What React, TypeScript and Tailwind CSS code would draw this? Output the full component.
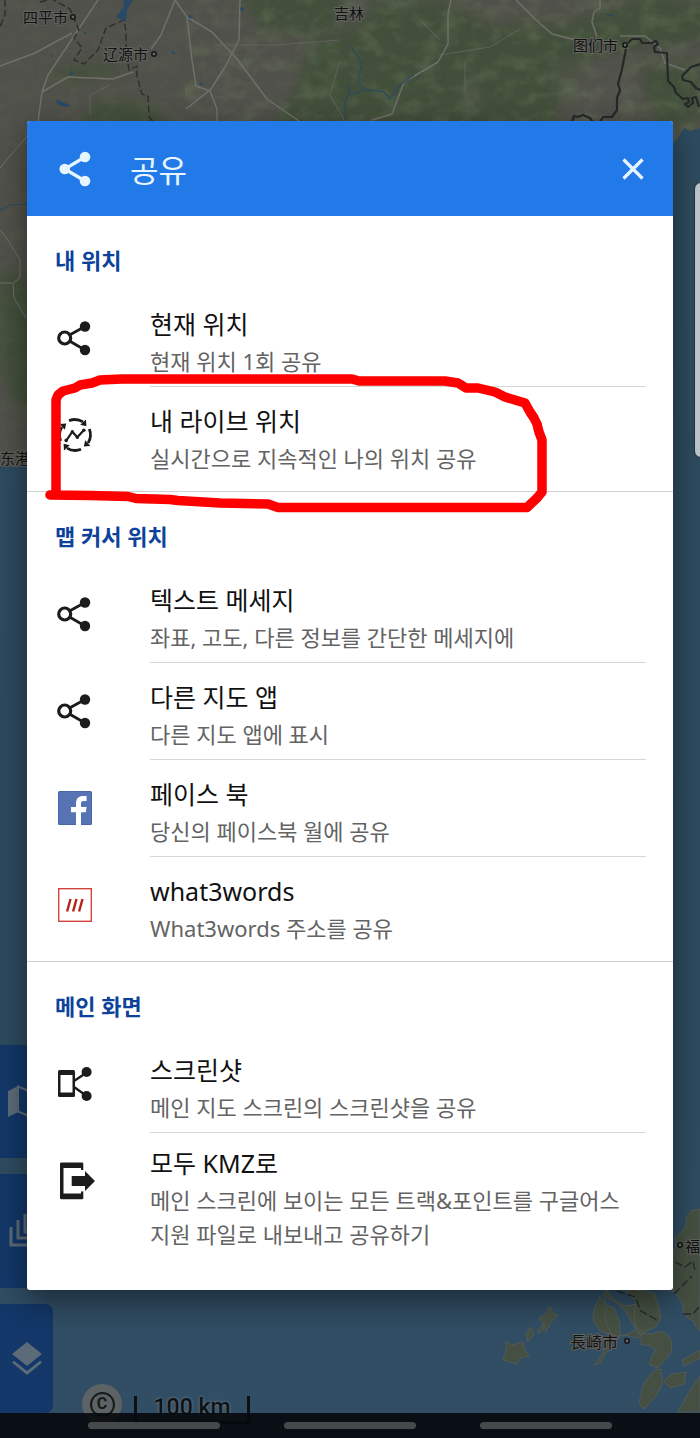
import type { ReactNode } from "react";

type ShareOption = {
  id: string;
  title: string;
  description: string;
  icon: ReactNode;
};

type ShareSection = {
  heading: string;
  options: ShareOption[];
};

const ShareIcon = () => (
  <svg viewBox="0 0 40 40" className="size-10" fill="none" aria-hidden="true">
    <path d="M14.5 17 30 8.5M14.5 23 30 32" stroke="#1c1c1c" strokeWidth="2.8" />
    <circle cx="9.7" cy="20" r="6" stroke="#1c1c1c" strokeWidth="3.2" />
    <circle cx="30" cy="8.5" r="5.2" fill="#1c1c1c" />
    <circle cx="30" cy="32" r="5.2" fill="#1c1c1c" />
  </svg>
);

const LiveIcon = () => (
  <svg viewBox="0 0 40 40" className="size-10" fill="none" aria-hidden="true">
    {[0, 90, 180, 270].map((angle) => (
      <g key={angle} transform={`rotate(${angle} 20 20)`}>
        <path d="M14 5.7A15.5 15.5 0 0 1 28 6.9" stroke="#1c1c1c" strokeWidth="2.8" />
        <path d="M31 4.6 31.4 11.2 25.2 9.8Z" fill="#1c1c1c" />
      </g>
    ))}
    <path
      d="m11.7 25 5.6-8.3 5 5.6 6-6.6"
      stroke="#1c1c1c"
      strokeWidth="2.2"
      strokeLinejoin="round"
    />
    <circle cx="11.2" cy="25.4" r="1.8" fill="#1c1c1c" />
    <circle cx="17.3" cy="16.7" r="1.6" fill="#1c1c1c" />
    <circle cx="22.3" cy="22.5" r="1.6" fill="#1c1c1c" />
    <circle cx="28.8" cy="15.3" r="1.8" fill="#1c1c1c" />
  </svg>
);

const FacebookIcon = () => (
  <svg viewBox="0 0 40 40" className="size-10" aria-hidden="true">
    <rect x="3" y="3" width="34" height="34" rx="1.5" fill="#4a66a6" />
    <rect x="4" y="4" width="32" height="32" rx="1" fill="#5873b3" />
    <path
      d="M21 37V24.3h-5v-5.4h5v-3.4c0-5 3-7.4 7.2-7.4h3.4v5h-3c-2 0-2.6 1-2.6 2.5v3.3h5.6l-.8 5.4H26V37Z"
      fill="#fff"
    />
  </svg>
);

const What3WordsIcon = () => (
  <svg viewBox="0 0 40 40" className="size-10" fill="none" aria-hidden="true">
    <rect x="3.7" y="3.7" width="32.6" height="32.6" stroke="#d2433e" strokeWidth="1.4" />
    <path d="m15.5 14-3.4 12.5M21.5 14l-3.4 12.5M27.5 14l-3.4 12.5" stroke="#b5231d" strokeWidth="2.4" />
  </svg>
);

const ScreenshotIcon = () => (
  <svg viewBox="0 0 40 40" className="size-10" aria-hidden="true">
    <path d="m19 17 12-8M19 23l12 8.5" stroke="#1c1c1c" strokeWidth="2.4" />
    <rect x="3" y="6" width="17" height="27" rx="1.5" fill="#1c1c1c" />
    <rect x="5.5" y="11" width="12" height="17.5" fill="#fff" />
    <circle cx="31.6" cy="8" r="5" fill="#1c1c1c" />
    <circle cx="31.6" cy="32" r="5" fill="#1c1c1c" />
  </svg>
);

const ExportIcon = () => (
  <svg viewBox="0 0 40 40" className="size-10 overflow-visible" fill="#1c1c1c" aria-hidden="true">
    <path d="M6.5 1.5H27q1.3 0 1.3 1.3V9H26V7H8.5v25.500H26v-2h2.3v6.4q0 1.3-1.3 1.3H6.500Q5 38.200 5 36.900V2.800Q5 1.500 6.500 1.500Z" />
    <path d="M16.7 15H30v-5l10 10-10 10v-5H16.7Z" />
  </svg>
);

const sections: ShareSection[] = [
  {
    heading: "내 위치",
    options: [
      { id: "current", title: "현재 위치", description: "현재 위치 1회 공유", icon: <ShareIcon /> },
      {
        id: "live",
        title: "내 라이브 위치",
        description: "실시간으로 지속적인 나의 위치 공유",
        icon: <LiveIcon />,
      },
    ],
  },
  {
    heading: "맵 커서 위치",
    options: [
      {
        id: "text",
        title: "텍스트 메세지",
        description: "좌표, 고도, 다른 정보를 간단한 메세지에",
        icon: <ShareIcon />,
      },
      {
        id: "maps",
        title: "다른 지도 앱",
        description: "다른 지도 앱에 표시",
        icon: <ShareIcon />,
      },
      {
        id: "facebook",
        title: "페이스 북",
        description: "당신의 페이스북 월에 공유",
        icon: <FacebookIcon />,
      },
      {
        id: "w3w",
        title: "what3words",
        description: "What3words 주소를 공유",
        icon: <What3WordsIcon />,
      },
    ],
  },
  {
    heading: "메인 화면",
    options: [
      {
        id: "screenshot",
        title: "스크린샷",
        description: "메인 지도 스크린의 스크린샷을 공유",
        icon: <ScreenshotIcon />,
      },
      {
        id: "kmz",
        title: "모두 KMZ로",
        description: "메인 스크린에 보이는 모든 트랙&포인트를 구글어스 지원 파일로 내보내고 공유하기",
        icon: <ExportIcon />,
      },
    ],
  },
];

const cities = [
  { name: "四平市", x: 23, y: 23, size: 15, dot: [73, 17] },
  { name: "辽源市", x: 103, y: 60, size: 15, dot: [154, 54] },
  { name: "吉林", x: 334, y: 19, size: 15, dot: null },
  { name: "图们市", x: 573, y: 51, size: 15, dot: [625, 45] },
  { name: "东港", x: 0, y: 464, size: 15, dot: null },
  { name: "福", x: 685, y: 1252, size: 15, dot: [680, 1245] },
  { name: "長崎市", x: 570, y: 1348, size: 16, dot: [627, 1341] },
];

function MapBackdrop() {
  return (
    <svg
      viewBox="0 0 700 1438"
      preserveAspectRatio="xMidYMin slice"
      className="absolute inset-0 h-full w-full"
      aria-hidden="true"
    >
      <defs>
        <linearGradient id="sea" x1="0" y1="0" x2="0" y2="1">
          <stop offset="0" stopColor="#2d4b60" />
          <stop offset="0.7" stopColor="#2d4a5e" />
          <stop offset="1" stopColor="#314e65" />
        </linearGradient>
        <filter id="soft" x="-10%" y="-20%" width="120%" height="140%">
          <feGaussianBlur stdDeviation="7" />
        </filter>
        {/* hill shading over the land */}
        <filter id="relief" x="0" y="0" width="100%" height="100%">
          <feTurbulence type="fractalNoise" baseFrequency="0.05 0.07" numOctaves="3" seed="8" />
          <feColorMatrix values="0 0 0 0 0.14  0 0 0 0 0.19  0 0 0 0 0.1  1.6 0 0 0 -0.66" />
        </filter>
        <clipPath id="land">
          <path d="M0 0h700v128l-10 3-6-3-6 10-4 5-10 4H300L28 300v165l-10 2-18-1Z" />
        </clipPath>
      </defs>
      <rect width="700" height="1438" fill="url(#sea)" />

      <g clipPath="url(#land)">
        <rect width="700" height="480" fill="#51514b" />
        <g fill="#43503b" filter="url(#soft)">
          <path d="M240-10h100l10 25-30 22-60-8Z" />
          <path d="M375 0h70l55 20 60 5 90-30 60 10v35l-70 8-50 12-40 70H270l25-40 15-45 50-20Z" />
          <path d="M95 100l50 2 35 25H80ZM45 70l70-8 5 12-60 10ZM0 270l35 10v135l-20-10-15-40Z" />
          <path d="M640 70l60-10v60l-40 10Z" />
        </g>
        <path
          d="M445 0l60 0 20 20-30 10ZM553 60l80 0 5 35-50 15-10 25-20-25ZM452 80l20 5 20 22-15 5Z"
          fill="#55554f"
          opacity=".55"
          filter="url(#soft)"
        />
        <rect x="185" width="515" height="150" filter="url(#relief)" opacity=".6" />
        <rect width="185" height="480" filter="url(#relief)" opacity=".25" />

        <g fill="none" stroke="#706f6b" strokeWidth="1.5" strokeLinejoin="round">
          <path d="M98 0 70 42 48 75 42 92 38 122M0 66 35 53 72 33M42 92 68 77l45 2 20-7" />
          <path d="m175 0 12 17 5 43 4 26 14 5 7 18v15M175 0l-14 35-10 14M187 17l25 15 25 27 30 40 32 22M240 0l-1 40-14 27-14 22-25 20" />
          <path d="M451 0l-3 14v30l-10 18-34 20-12 32-20 6M516 0l20 20 16 14 24 6M600 0v8l-6 4-2 10 5 15M620 36l25 0 15 12 5 15 20 7" />
          <path d="M28 135 8 158l-8 10M0 230l8 10 12 20v18l-7 5 1 15 12 20M0 283h12" strokeWidth="1" />
        </g>
        <path
          d="M440 55l50-8 30-18M215 45l60 0 65-5M420 20l20 20M350 130l-20-35 10-35M90 115v-20l20-10M465 62l0 30"
          fill="none"
          stroke="#6a6a64"
          strokeWidth=".7"
        />
        <path
          d="M40 2l12-3 18 10 9 21-5 8 8 10-8 12 10 4 14-14 8-22 18-8 2 12v20l3 18 8-4v10l5 18 6 2 1 20 8 12M5 0v15l-5 12"
          fill="none"
          stroke="#2c2a2c"
          strokeWidth="1.3"
          strokeDasharray="7 3"
        />
        <g fill="#294a66">
          <path d="m124 0-1 8-7 9 10 5 1-12 6-10ZM56 99l4 2 5 2 7 3-8 1-7-3ZM68 76l4-6 2 3ZM170 51l5 1v3Z" />
          <circle cx="52" cy="56" r="1.2" />
          <circle cx="85" cy="33" r="1.2" />
          <circle cx="190" cy="17" r="1.5" />
          <circle cx="242" cy="9" r="2" />
          <circle cx="201" cy="84" r="1.5" />
        </g>
        <path
          d="m347 85 3 5-5 12v18M350 45l12 18-4 18 6 8 20 3 6 7 10-14 14-10M605 14l8 2M350 95l15-5M0 210l10-5 18-1"
          fill="none"
          stroke="#2a4a61"
          strokeWidth="1.2"
        />
        <path
          d="m628 43 4-4h8l2 4h10l4-2 2 3-4 3 1 5 12 1 1 28 6 6 2 6 7 6 5-1 1 4-4 2 3 3 5-4-1-5 4-1 3 10M626 49l-4 20-4 15 2 6-3 8v12l-5 7h-9l-3 5M572 122l2-6 4 1 5-2 7 3 3 4M700 64l-9 3-9 9 1 4 8 2 5 6 4 2"
          fill="none"
          stroke="#252728"
          strokeWidth="2.2"
          strokeLinejoin="round"
        />
      </g>

      {/* Kyushu and the Goto islands */}
      <g fill="#455042" stroke="#525a58" strokeWidth="1">
        <path d="M700 1209l-8 1-5 6-2 12-10 10 1 9-3 3v42l6 5 4 8v8l6 6 5 2 2 6 4 4Z" />
        <path d="M607 1289l4 8 14 9 12-2-2 10 5 12 6 6-8 6-14-3-10 4-8 14-6 10-6 2 8-10 4-14 6-6-12-4-7-10 1-12 6-12 5 3 2 12 6 8-2 14 12 2 12-6 5 3 12 1 4-2 8 0 7 7 1 12-8 10-6 7-9-4 4-10 3-4-6-4-10-2 2-6-8-12-8-14-8-8-14-8Z" />
        <path d="M645 1291l9 2 5 14 2 11-5 9-12 5-8-4-2-14 2-13-10-9v-3ZM607 1305l7 3 6 16 0 14-9-4-6-15Z" />
        <path d="m654 1370 7-1 2 14-7 13-12 13-5-6 4-18ZM664 1381l8-7 14-2-2 12-14 4ZM700 1350l-18 10 2 6 16-8ZM700 1376l-10 14-12 22h22Z" />
        <path d="m506 1341 5 4 12-3 2 8 4 6-9 2-3 6-14-4 3-9ZM550 1306l-5 9-6 3 5 6 2 8 5-10 7-7-5-2ZM526 1335l4-8 4 7-6 8ZM537 1331l6-7 1 5-4 4Z" />
      </g>
      <path
        d="M617 1291l18 6 6 14 16 9M675 1262l10 5 8-6 2 10M674 1294l18-18M683 1314h10l7-8"
        fill="none"
        stroke="#24282a"
        strokeWidth="1.3"
        strokeDasharray="8 3"
      />

      {cities.map((city) => (
        <g key={city.name}>
          <text
            x={city.x}
            y={city.y}
            fontSize={city.size}
            className="font-['Noto_Sans_CJK_SC',sans-serif] [paint-order:stroke]"
            fill="#121212"
            stroke="#62625f"
            strokeWidth="2"
          >
            {city.name}
          </text>
          {city.dot && (
            <circle
              cx={city.dot[0]}
              cy={city.dot[1]}
              r="2.2"
              fill="#666"
              stroke="#151515"
              strokeWidth="1.5"
            />
          )}
        </g>
      ))}
    </svg>
  );
}

function MapTools() {
  return (
    <div className="absolute bottom-[25px] left-0 flex w-[53px] flex-col gap-4 text-[#5c6b77]">
      <button className="h-[113px] rounded-r-lg bg-[#123768]" aria-label="Maps">
        <svg viewBox="0 0 40 40" className="ml-1 size-10" fill="none" aria-hidden="true">
          <path d="m4 9 10-5v26L4 35ZM26 9l10-5v26l-10 5Z" fill="currentColor" />
          <path d="m14 4.5 12 5v25l-12-5Z" stroke="currentColor" strokeWidth="2" />
        </svg>
      </button>
      <button className="h-[114px] rounded-r-lg bg-[#123768]" aria-label="Tracks">
        <svg
          viewBox="0 0 40 40"
          className="ml-1 size-10"
          fill="none"
          stroke="currentColor"
          strokeWidth="3"
          aria-hidden="true"
        >
          <path d="M7 16v18h20M14 9v18h20M21 3v18h18" />
        </svg>
      </button>
      <button className="flex h-[109px] items-center rounded-r-lg bg-[#123768]" aria-label="Layers">
        <svg
          viewBox="0 0 32 34"
          className="ml-[11px] h-[34px] w-8"
          fill="currentColor"
          aria-hidden="true"
        >
          <path d="m16 0 15 12-15 12L1 12Z" />
          <path d="m1 20.5 2-1.7L16 29l13-10.2 2 1.7L16 33Z" />
        </svg>
      </button>
    </div>
  );
}

function MapScale() {
  return (
    <div className="absolute bottom-[14px] left-[82px] flex items-end gap-3">
      <span className="flex size-10 items-center justify-center rounded-full bg-[#5d6365]">
        <span className="flex size-[25px] items-center justify-center rounded-full border-2 border-[#171a1c] font-['Roboto',sans-serif] text-base font-bold text-[#171a1c]">
          C
        </span>
      </span>
      <span className="flex h-7 w-[116px] items-center justify-center border-x-[3px] border-b-[3px] border-[#0e1114] font-['Roboto',sans-serif] text-[23px] font-medium text-[#0e1114] [text-shadow:0_0_3px_#7b868c]">
        100 km
      </span>
    </div>
  );
}

function OptionRow({ option, last }: { option: ShareOption; last: boolean }) {
  const wraps = option.id === "kmz";
  return (
    <li>
      <button className="flex w-full items-start pr-[27px] pl-7 text-left">
        <span className="flex h-24 w-10 shrink-0 items-center">{option.icon}</span>
        <span
          className={`ml-[55px] flex min-h-[97px] flex-1 flex-col border-b ${
            last ? "border-transparent" : "border-[#d6d6d6]"
          } ${wraps ? "pt-3" : "pt-4"}`}
        >
          <span className="text-[25px] leading-9 text-[#111]">{option.title}</span>
          <span
            className={`text-[22px] break-keep text-[#636363] ${
              wraps ? "pt-0.5 leading-[34px]" : "leading-[38px]"
            }`}
          >
            {option.description}
          </span>
        </span>
      </button>
    </li>
  );
}

// Freehand marker ring around the live location row
function MarkerRing() {
  return (
    <svg
      viewBox="45 374 504 144"
      className="pointer-events-none absolute top-[253px] left-[18px] h-[144px] w-[504px]"
      fill="none"
      aria-hidden="true"
    >
      <path
        d="M50 495h6v-95l2-5 5-4 12-3 5-3 12-2 8-3 22-1 230 0 7 2 86 0 13 2 8 5h12l17 4 10 5 10 3 10 3 5 9 4 6 3 6 2 8 3 8v52l-5 6-10 9.500H278l-10-3.500-48-1-42-2.500-8-1-34-1-8-2-38-1Z"
        stroke="#fe0000"
        strokeWidth="9.5"
        strokeLinejoin="round"
        strokeLinecap="round"
      />
    </svg>
  );
}

export default function App() {
  return (
    <div className="relative min-h-screen overflow-hidden bg-[#2d4a5e] px-[27px] pt-[121px] pb-[147px] font-['Noto_Sans','Noto_Sans_CJK_KR',sans-serif]">
      <MapBackdrop />
      <MapTools />
      <MapScale />
      <div className="absolute top-[182px] -right-2 h-[276px] w-3.5 rounded-lg border border-[#1f3442] bg-[#bdc6c8]" />

      <div className="absolute inset-x-0 bottom-0 flex h-[25px] items-center justify-center gap-16 bg-[#06090c]/90">
        <span className="h-[7px] w-[132px] rounded-full bg-[#46494b]" />
        <span className="h-[7px] w-[132px] rounded-full bg-[#46494b]" />
        <span className="h-[7px] w-[132px] rounded-full bg-[#46494b]" />
      </div>

      <div
        role="dialog"
        aria-labelledby="share-title"
        className="relative rounded-[3px] bg-white shadow-[0_10px_30px_rgba(0,0,0,0.45)]"
      >
        <header className="flex h-[95px] items-center rounded-t-[3px] bg-[#2279e8] pr-7 pl-7 text-[#e6f5ff]">
          <svg viewBox="0 0 40 40" className="size-10" fill="currentColor" aria-hidden="true">
            <path d="M30 8 9.7 20 30 32" fill="none" stroke="currentColor" strokeWidth="3.2" />
            <circle cx="9.7" cy="20" r="5.3" />
            <circle cx="30" cy="8" r="5.3" />
            <circle cx="30" cy="32" r="5.3" />
          </svg>
          <h1 id="share-title" className="ml-[35px] flex-1 pt-0.5 text-[31px] leading-10">
            공유
          </h1>
          <button aria-label="닫기">
            <svg viewBox="0 0 24 24" className="size-6" fill="none" aria-hidden="true">
              <path d="m2.5 2.5 19 19m0-19-19 19" stroke="currentColor" strokeWidth="3.2" />
            </svg>
          </button>
        </header>

        {sections.map((section, index) => (
          <section
            key={section.heading}
            className={
              index < sections.length - 1 ? "border-b border-[#d0d0d0] pb-[7px]" : "pb-[38px]"
            }
          >
            <h2 className="px-7 pt-7 pb-3.5 text-[22px] leading-8 font-bold text-[#0d429b]">
              {section.heading}
            </h2>
            <ul>
              {section.options.map((option, i) => (
                <OptionRow
                  key={option.id}
                  option={option}
                  last={i === section.options.length - 1}
                />
              ))}
            </ul>
          </section>
        ))}

        <MarkerRing />
      </div>
    </div>
  );
}
